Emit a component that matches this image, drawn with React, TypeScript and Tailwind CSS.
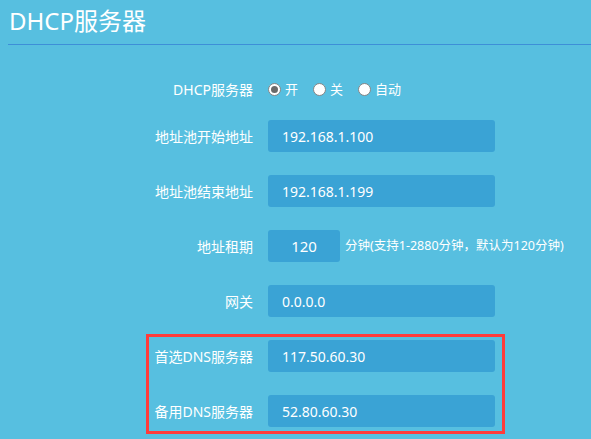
import React from "react";

const rows = [
  { label: "地址池开始地址", value: "192.168.1.100" },
  { label: "地址池结束地址", value: "192.168.1.199" },
];

function Radio({ checked, label }: { checked?: boolean; label: string }) {
  return (
    <label className="flex items-center gap-[4px] mr-[15px]">
      <span className="flex h-[13px] w-[13px] items-center justify-center rounded-full border border-[#858585] bg-white">
        {checked && <span className="h-[7px] w-[7px] rounded-full bg-[#6a6a6a]" />}
      </span>
      <span className="text-[13px] leading-none">{label}</span>
    </label>
  );
}

function Field({ value, className = "w-[227px]" }: { value: string; className?: string }) {
  return (
    <div className={`flex h-[32px] items-center rounded-[3px] bg-[#3aa3d5] pl-[14px] text-[14px] ${className}`}>
      {value}
    </div>
  );
}

export default function App() {
  return (
    <div className="min-h-screen overflow-hidden bg-[#57bfe0] text-white font-['Noto_Sans','Noto_Sans_CJK_SC',sans-serif]">
      {/* Header */}
      <div className="ml-[8px] h-[45px] border-b border-[#3d8fd8] pl-[1px] pt-[5px]">
        <h1 className="text-[24px] leading-[32px]">DHCP服务器</h1>
      </div>

      {/* DHCP switch */}
      <div className="mt-[34px] flex h-[20px] items-center">
        <div className="w-[253px] text-right text-[14px]">DHCP服务器</div>
        <div className="ml-[15px] flex items-center">
          <Radio checked label="开" />
          <Radio label="关" />
          <Radio label="自动" />
        </div>
      </div>

      <div className="mt-[21px] flex flex-col gap-[23px]">
        {rows.map((r) => (
          <div key={r.label} className="flex items-center">
            <div className="w-[253px] text-right text-[14px]">{r.label}</div>
            <div className="ml-[15px]">
              <Field value={r.value} />
            </div>
          </div>
        ))}

        <div className="flex items-center">
          <div className="w-[253px] text-right text-[14px]">地址租期</div>
          <div className="ml-[15px] flex items-center">
            <div className="flex h-[32px] w-[72px] items-center justify-center rounded-[3px] bg-[#3aa3d5] text-[15px]">
              120
            </div>
            <span className="ml-[5px] text-[12.5px]">分钟(支持1-2880分钟，默认为120分钟)</span>
          </div>
        </div>

        <div className="flex items-center">
          <div className="w-[253px] text-right text-[14px]">网关</div>
          <div className="ml-[15px]">
            <Field value="0.0.0.0" />
          </div>
        </div>
      </div>

      {/* DNS (highlighted) */}
      <div className="ml-[146px] mt-[17px] w-[359px] border-[3px] border-[#ff3b3b] pb-[4px] pt-[3px]">
        <div className="flex flex-col gap-[23px]">
          <div className="flex items-center">
            <div className="w-[104px] text-right text-[14px]">首选DNS服务器</div>
            <div className="ml-[15px]">
              <Field value="117.50.60.30" />
            </div>
          </div>
          <div className="flex items-center">
            <div className="w-[104px] text-right text-[14px]">备用DNS服务器</div>
            <div className="ml-[15px]">
              <Field value="52.80.60.30" />
            </div>
          </div>
        </div>
      </div>
    </div>
  );
}
